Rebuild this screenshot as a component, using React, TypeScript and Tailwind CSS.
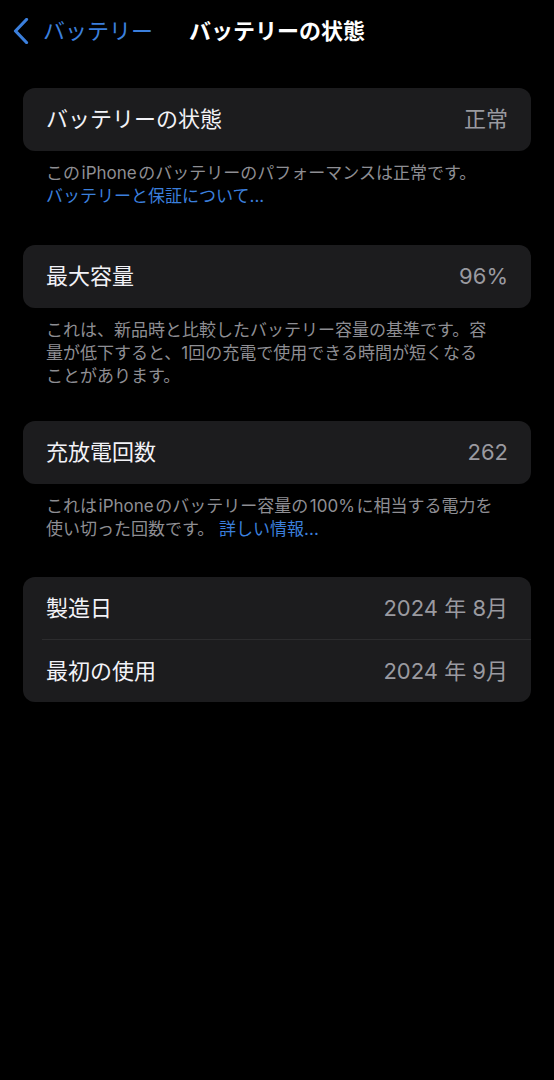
const font = { fontFamily: 'Inter, "Noto Sans CJK JP", "Noto Sans", sans-serif' };

function Row({ label, value, h = 'h-[63px]' }: { label: string; value: string; h?: string }) {
  return (
    <div className={`flex ${h} items-center justify-between px-[23px]`}>
      <span className="text-[22px] text-[#f2f2f7]">{label}</span>
      <span className="text-[22px] text-[#9a9aa0]">{value}</span>
    </div>
  );
}

export default function App() {
  return (
    <div className="min-h-[1080px] w-full bg-black" style={font}>
      <div className="flex h-[62px] items-center">
        <div className="flex items-center pl-[13px] text-[#3b7fdc]">
          <svg width="16" height="26" viewBox="0 0 16 26" fill="none" className="mr-[14px]">
            <path d="M13.5 1.5 L2.5 13 L13.5 24.5" stroke="currentColor" strokeWidth="3.2" strokeLinecap="round" strokeLinejoin="round" />
          </svg>
          <span className="text-[22px] leading-none">バッテリー</span>
        </div>
        <span className="ml-[36px] text-[22px] font-bold leading-none text-white">バッテリーの状態</span>
      </div>

      <div className="mt-[26px] px-[23px]">
        <div className="rounded-[12px] bg-[#1c1c1e]">
          <Row label="バッテリーの状態" value="正常" />
        </div>
        <p className="mt-[11px] mb-[37px] px-[23px] text-[17px] leading-[23px] text-[#8e8e93]">
          この&#8202;iPhone&#8202;のバッテリーのパフォーマンスは正常です。
          <br />
          <span className="text-[#3b7fdc]">バッテリーと保証について...</span>
        </p>

        <div className="rounded-[12px] bg-[#1c1c1e]">
          <Row label="最大容量" value="96%" />
        </div>
        <p className="mt-[11px] mb-[33px] px-[23px] text-[17px] leading-[23px] text-[#8e8e93]">
          これは、新品時と比較したバッテリー容量の基準です。容
          <br />
          量が低下すると、1回の充電で使用できる時間が短くなる
          <br />
          ことがあります。
        </p>

        <div className="rounded-[12px] bg-[#1c1c1e]">
          <Row label="充放電回数" value="262" />
        </div>
        <p className="mt-[11px] mb-[36px] px-[23px] text-[17px] leading-[23px] text-[#8e8e93]">
          これは&#8202;iPhone&#8202;のバッテリー容量の&#8202;100%&#8202;に相当する電力を
          <br />
          使い切った回数です。 <span className="text-[#3b7fdc]">詳しい情報...</span>
        </p>

        <div className="rounded-[12px] bg-[#1c1c1e]">
          <Row label="製造日" value="2024 年 8月" h="h-[62px]" />
          <div className="ml-[19px] h-px bg-[#2c2c2e]" />
          <Row label="最初の使用" value="2024 年 9月" h="h-[62px]" />
        </div>
      </div>
    </div>
  );
}
